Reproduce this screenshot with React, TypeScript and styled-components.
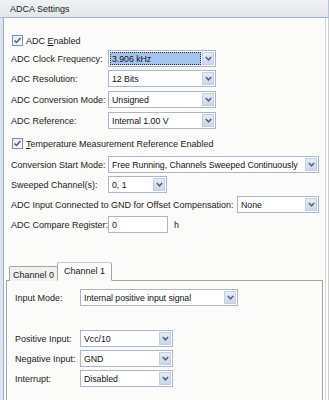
import styled, { createGlobalStyle } from "styled-components";

const GlobalStyle = createGlobalStyle`
  html, body {
    margin: 0;
    padding: 0;
    background: #fbfbf9;
  }
  body {
    font-family: "Liberation Sans", Arial, sans-serif;
    font-size: 9px;
    color: #1a1a1a;
  }
`;

const Window = styled.div`
  width: 329px;
  height: 400px;
  overflow: hidden;
  display: flex;
  flex-direction: column;
  background: #fbfbf9;
`;

const Header = styled.div`
  height: 17px;
  flex-shrink: 0;
  display: flex;
  align-items: center;
  padding-left: 10px;
  background: linear-gradient(#eff1f3, #e3e7eb);
  border-bottom: 1px solid #a3b5cb;
  border-right: 1px solid #b4c4d6;
`;

const Frame = styled.div`
  flex: 1;
  display: flex;
  background: #dce4ee;
  padding-left: 3px;
`;

const Body = styled.div`
  flex: 1;
  display: flex;
  flex-direction: column;
  background: #fbfbf9;
  border-left: 1px solid #9aadc4;
  border-right: 1px solid #cdcdcd;
  box-shadow: inset -2px 0 0 #fdfdfd, inset -3px 0 0 #d6d6d6;
  padding: 0 5px 0 7px;
`;

const Row = styled.div<{ $mt: number }>`
  display: flex;
  align-items: center;
  height: 17px;
  margin-top: ${(p) => p.$mt}px;
  flex-shrink: 0;
`;

const Label = styled.span<{ $w?: number }>`
  width: ${(p) => (p.$w ? `${p.$w}px` : "auto")};
  white-space: nowrap;
`;

const Check = styled.span`
  width: 11px;
  height: 11px;
  box-sizing: border-box;
  margin: 0 3px 0 1px;
  border: 1px solid #7f8fa9;
  background: linear-gradient(135deg, #e6e9ee, #fdfdfd);
  display: flex;
  align-items: center;
  justify-content: center;
`;

const Select = styled.div<{ $w: number }>`
  width: ${(p) => p.$w}px;
  height: 17px;
  box-sizing: border-box;
  display: flex;
  border: 1px solid #a9b7c9;
  background: #fff;
  padding: 1px;
`;

const Value = styled.div<{ $focus?: boolean }>`
  flex: 1;
  display: flex;
  align-items: center;
  padding-left: 2px;
  margin-right: 1px;
  white-space: nowrap;
  overflow: hidden;
  font-size: 8.8px;
  letter-spacing: -0.05px;
  background: ${(p) => (p.$focus ? "#a6c5ee" : "transparent")};
  outline: ${(p) => (p.$focus ? "1px dotted #333" : "none")};
  outline-offset: -1px;
  color: #111;
`;

const DropButton = styled.div`
  width: 12px;
  box-sizing: border-box;
  background: linear-gradient(#e7ecf4, #cdd7e6);
  border: 1px solid #c3cfdf;
  display: flex;
  align-items: center;
  justify-content: center;
`;

const TextBox = styled.div<{ $w: number }>`
  width: ${(p) => p.$w}px;
  height: 17px;
  box-sizing: border-box;
  border: 1px solid #a9b7c9;
  background: #fff;
  display: flex;
  align-items: center;
  padding-left: 3px;
`;

const Suffix = styled.span`
  margin-left: 6px;
`;

const Tabs = styled.div`
  margin-top: 29px;
  margin-left: -5px;
  flex: 1;
  display: flex;
  flex-direction: column;
`;

const TabStrip = styled.div`
  display: flex;
  align-items: flex-end;
  height: 19px;
  padding-left: 3px;
  margin-bottom: -1px;
  position: relative;
  z-index: 1;
`;

const Tab = styled.div<{ $active?: boolean }>`
  height: ${(p) => (p.$active ? 19 : 15)}px;
  box-sizing: border-box;
  padding: ${(p) => (p.$active ? "0 6px 2px" : "1px 3px 0")};
  display: flex;
  align-items: center;
  border: 1px solid #a4a4a4;
  border-bottom: ${(p) => (p.$active ? "1px solid #fbfbf9" : "none")};
  border-top-color: ${(p) => (p.$active ? "#b9cde4" : "#a4a4a4")};
  background: ${(p) => (p.$active ? "#fbfbf9" : "#f1f1ef")};
  margin-left: ${(p) => (p.$active ? -1 : 0)}px;
  border-radius: 2px 2px 0 0;
`;

const Pane = styled.div`
  flex: 1;
  border: 1px solid #a4a4a4;
  border-bottom: none;
  background: #fbfbf9;
  padding-left: 8px;
  display: flex;
  flex-direction: column;
`;

const Chevron = () => (
  <svg width="7" height="5" viewBox="0 0 7 5">
    <polyline points="0.8,1 3.5,3.8 6.2,1" fill="none" stroke="#4c6088" strokeWidth="1.5" />
  </svg>
);

const Tick = () => (
  <svg width="9" height="9" viewBox="0 0 9 9">
    <polyline points="1.5,4.5 3.5,6.5 7.5,2" fill="none" stroke="#4a5a78" strokeWidth="1.5" />
  </svg>
);

const Drop = ({ w, value, focus }: { w: number; value: string; focus?: boolean }) => (
  <Select $w={w}>
    <Value $focus={focus}>{value}</Value>
    <DropButton>
      <Chevron />
    </DropButton>
  </Select>
);

const mainRows = [
  { mt: 1, label: "ADC Clock Frequency:", value: "3.906 kHz", focus: true },
  { mt: 3, label: "ADC Resolution:", value: "12 Bits" },
  { mt: 4, label: "ADC Conversion Mode:", value: "Unsigned" },
  { mt: 4, label: "ADC Reference:", value: "Internal 1.00 V" },
];

const paneRows = [
  { mt: 24, label: "Positive Input:", value: "Vcc/10" },
  { mt: 3, label: "Negative Input:", value: "GND" },
  { mt: 3, label: "Interrupt:", value: "Disabled" },
];

export default function App() {
  return (
    <>
      <GlobalStyle />
      <Window>
        <Header>ADCA Settings</Header>
        <Frame>
          <Body>
            <Row $mt={14}>
              <Check>
                <Tick />
              </Check>
              <Label>
                ADC <u>E</u>nabled
              </Label>
            </Row>
            {mainRows.map((r) => (
              <Row $mt={r.mt} key={r.label}>
                <Label $w={97}>{r.label}</Label>
                <Drop w={108} value={r.value} focus={r.focus} />
              </Row>
            ))}
            <Row $mt={6}>
              <Check>
                <Tick />
              </Check>
              <Label>
                <u>T</u>emperature Measurement Reference Enabled
              </Label>
            </Row>
            <Row $mt={4}>
              <Label $w={97}>Conversion Start Mode:</Label>
              <Drop w={211} value="Free Running, Channels Sweeped Continuously" />
            </Row>
            <Row $mt={3}>
              <Label $w={97}>Sweeped Channel(s):</Label>
              <Drop w={59} value="0, 1" />
            </Row>
            <Row $mt={3}>
              <Label $w={226}>ADC Input Connected to GND for Offset Compensation:</Label>
              <Drop w={82} value="None" />
            </Row>
            <Row $mt={3}>
              <Label $w={97}>ADC Compare Register:</Label>
              <TextBox $w={60}>0</TextBox>
              <Suffix>h</Suffix>
            </Row>
            <Tabs>
              <TabStrip>
                <Tab>Channel 0</Tab>
                <Tab $active>Channel 1</Tab>
              </TabStrip>
              <Pane>
                <Row $mt={8}>
                  <Label $w={65}>Input Mode:</Label>
                  <Drop w={158} value="Internal positive input signal" />
                </Row>
                {paneRows.map((r) => (
                  <Row $mt={r.mt} key={r.label}>
                    <Label $w={65}>{r.label}</Label>
                    <Drop w={93} value={r.value} />
                  </Row>
                ))}
              </Pane>
            </Tabs>
          </Body>
        </Frame>
      </Window>
    </>
  );
}
